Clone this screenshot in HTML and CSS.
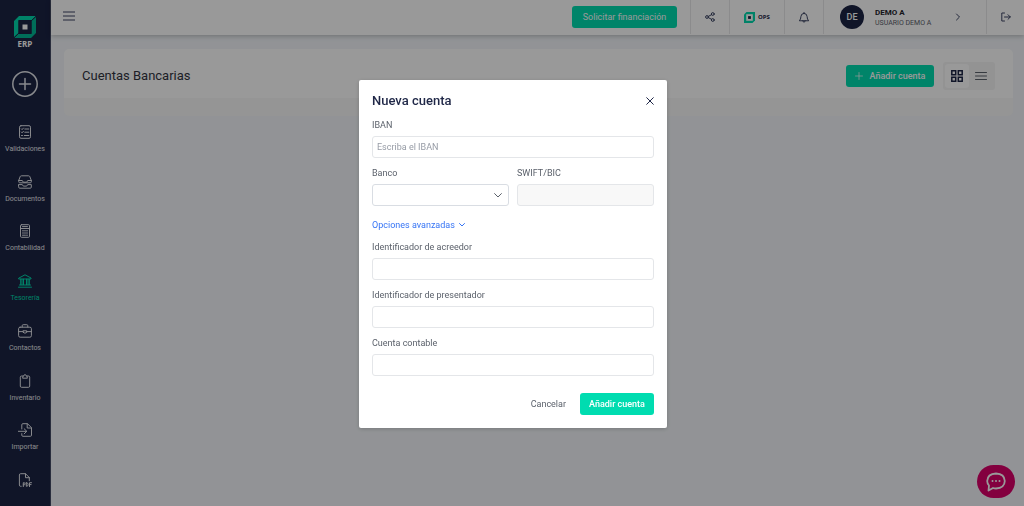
FILE: index.html
```html
<!DOCTYPE html>
<html lang="es">
<head>
<meta charset="utf-8">
<title>Cuentas Bancarias</title>
<link rel="stylesheet" href="styles.css">
</head>
<body>
<div class="app">
  <aside class="sidebar">
    <a class="brand" href="#" aria-label="Inicio ERP">
      <svg class="brand-mark" viewBox="0 0 22 22"><path fill="#00d9ad" d="M5 0H22L18 4H4.500V17L0 21V5Z"/><path fill="#00b894" d="M22 1V17L17 22H0L4 18H17.500V5Z"/><path fill="#1b2344" d="M4.500 4.500H17.500V17.500H4.500Z"/><path stroke="#1b2344" stroke-width=".8" d="M0 22l5-5M17 5l5-5"/><path fill="#fff" d="M8.500 8.500h5v5h-5z"/></svg>
      <span class="brand-name">ERP</span>
    </a>
    <button class="create" type="button" aria-label="Crear">
      <svg viewBox="0 0 26 26"><circle cx="13" cy="13" r="12.200"/><path d="M13 7.500v11M7.500 13h11"/></svg>
    </button>
    <nav class="nav">
      <a class="nav-item" href="#"><svg viewBox="0 0 14 14"><rect x="1.500" y=".7" width="11" height="12.600" rx="1.500"/><path d="M3.300 3.800l.8.800 1.300-1.500M3.300 7l.8.800 1.300-1.500M3.500 10.500h1M6.800 4h4M6.800 7.200h4M6.300 10.500h4.500"/></svg><span>Validaciones</span></a>
      <a class="nav-item" href="#"><svg viewBox="0 0 14 14"><path d="M.7 5.500L2.200 1.600Q2.500.8 3.400.8h7.200q.9 0 1.200.8l1.500 3.900v1.300q0 1-1 1H1.700q-1 0-1-1ZM.7 5.500h3.600q.4 1.700 1.500 1.700h2.400q1.100 0 1.500-1.700h3.600M.7 9.600h3.600q.4 1.500 1.500 1.500h2.400q1.100 0 1.500-1.500h3.600v2.600q0 1-1 1H1.700q-1 0-1-1Z"/></svg><span>Documentos</span></a>
      <a class="nav-item" href="#"><svg viewBox="0 0 14 14"><rect x="2.500" y=".7" width="9" height="12.600" rx="1"/><path d="M2.500 4.500h9M4.500 2.600h5M4.500 6.800h1M6.500 6.800h1M8.500 6.800h1M4.500 9h1M6.500 9h1M8.500 9h1M4.500 11.200h3M8.500 11.200h1"/></svg><span>Contabilidad</span></a>
      <a class="nav-item active" href="#"><svg viewBox="0 0 14 14"><path d="M1 4L7 .8 13 4v1H1ZM2.700 5.200v5.500M5.500 5.200v5.500M8.500 5.200v5.500M11.300 5.200v5.500M4 5.200v5.500M10 5.200v5.500M1.500 11h11M.5 13.200h13"/></svg><span>Tesorería</span></a>
      <a class="nav-item" href="#"><svg viewBox="0 0 14 14"><rect x=".6" y="3.200" width="12.800" height="10" rx="1.500"/><path d="M4.200 3V1.700q0-1 1-1h3.600q1 0 1 1V3M.6 7.600h4.600M8.800 7.600h4.600M5.300 6.800h3.400v1.700q-1.700 1.500-3.400 0Z"/></svg><span>Contactos</span></a>
      <a class="nav-item" href="#"><svg viewBox="0 0 14 14"><path d="M4.800 2H3.500q-1.200 0-1.200 1.200v8.900q0 1.200 1.200 1.200h7q1.200 0 1.200-1.200V3.200Q11.700 2 10.500 2H9.200M4.700 3.800l.5-1.900h.6q.2-1.300 1.200-1.300t1.200 1.300h.6l.5 1.900Z"/></svg><span>Inventario</span></a>
      <a class="nav-item" href="#"><svg viewBox="0 0 14 14"><path d="M3.800 6V1.800q0-1.100 1.100-1.100h4.600l4 4v7.500q0 1.100-1.100 1.100H4.900q-1.100 0-1.100-1.100v-1.600M9.200.8v4.200h4.200M.3 8.300h8.200M6.200 5.800l2.600 2.500-2.600 2.500"/></svg><span>Importar</span></a>
      <a class="nav-item" href="#" aria-label="PDF"><svg viewBox="0 0 14 14"><path d="M3.200 13.300H2.600q-1.200 0-1.200-1.200V1.900Q1.400.7 2.600.7h4.900l3.800 3.800v3.300M7.500.8v3.900h3.800M5.300 13.600V9.700h.8q1 0 1 1.100t-1 1.100h-.8M8.300 9.700v3.600h.4q1.400 0 1.400-1.800t-1.400-1.800ZM11.500 13.600V9.700h2M11.500 11.600h1.600"/></svg></a>
    </nav>
  </aside>

  <div class="page">
    <header class="topbar">
      <button class="menu" type="button" aria-label="Menú"><svg viewBox="0 0 12 10"><path d="M0 1h12M0 5h12M0 9h12"/></svg></button>
      <div class="promo"><button class="btn btn-wide" type="button">Solicitar financiación</button></div>
      <a class="cell share" href="#" aria-label="Compartir"><svg viewBox="0 0 10 10"><circle cx="2" cy="5" r="1.400"/><circle cx="7.800" cy="2" r="1.400"/><circle cx="7.800" cy="8" r="1.400"/><path d="M3.300 4.400l3.200-1.700M3.300 5.600l3.200 1.700"/></svg></a>
      <a class="cell ops" href="#"><svg viewBox="0 0 11 11"><path fill="#00d9ad" d="M2.500 0H11V8.500L8.500 11H0V2.500Z"/><path fill="#fff" d="M2.200 2.200h6.600v6.600H2.200z"/><path fill="#1b2344" d="M4.100 4.100h2.800v2.800H4.100z"/></svg><span>OPS</span></a>
      <button class="cell bell" type="button" aria-label="Notificaciones"><svg viewBox="0 0 10 11"><path d="M.6 8.500Q1.900 7.300 1.900 4.600 2 1.600 5 1.400 8 1.600 8.100 4.600q0 2.700 1.300 3.900ZM5 1.400V.4M3.800 8.700Q4 10.200 5 10.200t1.200-1.500"/></svg></button>
      <button class="cell user" type="button">
        <span class="avatar">DE</span>
        <span class="who"><b>DEMO A</b><span>USUARIO DEMO A</span></span>
        <svg viewBox="0 0 6 8"><path d="M1.500 1l3 3-3 3"/></svg>
      </button>
      <a class="cell logout" href="#" aria-label="Salir"><svg viewBox="0 0 10 10"><path d="M3.500 1H.8v8h2.700M3.500 5h5.800M7 2.700L9.300 5 7 7.300"/></svg></a>
    </header>
    <main class="content">
      <section class="card">
        <div class="card-head">
          <h1>Cuentas Bancarias</h1>
          <button class="btn btn-add" type="button"><svg viewBox="0 0 8 8"><path d="M4 .5v7M.5 4h7"/></svg>Añadir cuenta</button>
          <div class="views">
            <button class="view on" type="button" aria-label="Cuadrícula"><svg viewBox="0 0 12 12"><path d="M.8.800h3.900v3.900H.8zM7.300.8h3.900v3.900H7.300zM.8 7.300h3.900v3.900H.8zM7.300 7.300h3.900v3.900H7.300z"/></svg></button>
            <button class="view" type="button" aria-label="Lista"><svg viewBox="0 0 12 12"><path d="M.5 2.500h11M.5 6h11M.5 9.500h11"/></svg></button>
          </div>
        </div>
        <div class="card-body"></div>
      </section>
    </main>
  </div>
</div>

<button class="chat" type="button" aria-label="Chat"><svg viewBox="0 0 20 20"><path d="M2.500 18.500l.5-5Q1.200 11.500 1.200 9 1.500 1.900 10 1.500q8.500.4 8.800 7.500-.3 7.100-8.800 7.500-1.800 0-3-.5Z"/><path class="dots" d="M6.500 9h.01M10 9h.01M13.500 9h.01"/></svg></button>

<div class="overlay">
  <form class="modal" role="dialog" aria-labelledby="modal-title">
    <div class="modal-head">
      <h2 id="modal-title">Nueva cuenta</h2>
      <button class="close" type="button" aria-label="Cerrar"><svg viewBox="0 0 8 8"><path d="M.7.700l6.600 6.600M7.300.7L.7 7.300"/></svg></button>
    </div>
    <div class="fields">
      <div class="field"><label for="iban">IBAN</label><input id="iban" type="text" placeholder="Escriba el IBAN"></div>
      <div class="row">
        <div class="field"><label for="bank">Banco</label>
          <div class="select"><select id="bank"><option></option></select><svg viewBox="0 0 8 5"><path d="M.6.600L4 4 7.400.6"/></svg></div>
        </div>
        <div class="field"><label for="bic">SWIFT/BIC</label><input id="bic" type="text" disabled></div>
      </div>
    </div>
    <button class="advanced" type="button">Opciones avanzadas<svg viewBox="0 0 6 4"><path d="M.5.500L3 3 5.500.5"/></svg></button>
    <div class="fields">
      <div class="field"><label for="creditor">Identificador de acreedor</label><input id="creditor" type="text"></div>
      <div class="field"><label for="presenter">Identificador de presentador</label><input id="presenter" type="text"></div>
      <div class="field"><label for="account">Cuenta contable</label><input id="account" type="text"></div>
    </div>
    <div class="modal-foot">
      <button class="cancel" type="button">Cancelar</button>
      <button class="btn btn-save" type="submit">Añadir cuenta</button>
    </div>
  </form>
</div>
</body>
</html>
```
FILE: styles.css
```css
* { box-sizing: border-box; }
body { margin: 0; font-family: Roboto, sans-serif; font-size: 9px; line-height: 10px; color: #5b616b; background: #f3f6fa; }
button, input, select { font: inherit; color: inherit; }
button { padding: 0; border: 0; background: none; }
a { color: inherit; text-decoration: none; }
h1, h2 { margin: 0; }
svg { display: block; flex: none; fill: none; stroke: currentColor; stroke-width: 1; stroke-linecap: round; stroke-linejoin: round; }

.app { display: flex; height: 100vh; }
.sidebar { display: flex; flex-direction: column; align-items: center; flex: none; width: 51px; padding: 16px 0 19px; overflow: hidden; color: #e3e5ea; background: #1b2344; border-right: 1px solid #454c66; }
.brand { display: flex; flex-direction: column; align-items: center; gap: 1px; color: #fff; }
.brand-mark { width: 22px; height: 22px; stroke: none; }
.brand-name { font: 700 8px/10px "Open Sans", sans-serif; }
.create { margin-top: 22px; }
.create svg { width: 26px; height: 26px; stroke-width: 1.5; }
.nav { display: flex; flex-direction: column; justify-content: space-between; flex: 1; margin-top: 28px; }
.nav-item { display: flex; flex-direction: column; align-items: center; gap: 5px; font-size: 7px; }
.nav-item svg { width: 14px; height: 14px; }
.nav-item.active { color: #00d9ad; }

.page { display: flex; flex-direction: column; flex: 1; min-width: 0; }
.topbar { display: flex; flex: none; height: 35px; color: #3c4564; background: #fff; box-shadow: 0 1px 5px #00000040; }
.menu { padding-left: 12px; margin-bottom: 3px; }
.menu svg { width: 12px; height: 10px; }
.promo { display: flex; justify-content: flex-end; flex: 1; padding: 6px 13px 0 0; }
.btn { display: flex; align-items: center; justify-content: center; height: 22px; border-radius: 3px; color: #fff; background: #00dcb0; }
.btn-wide { width: 105px; }
.cell { display: flex; align-items: center; justify-content: center; flex: none; height: 34px; border-left: 1px solid #e8e8ea; }
.share { width: 39px; }
.share svg { width: 10px; height: 10px; }
.ops { width: 55px; gap: 3px; font: 700 6px/10px "Open Sans", sans-serif; color: #1b2344; }
.ops svg { width: 11px; height: 11px; stroke: none; }
.bell { width: 39px; }
.bell svg { width: 10px; height: 11px; }
.user { width: 163px; padding: 0 25px 0 16px; justify-content: flex-start; text-align: left; }
.user svg { width: 6px; height: 8px; margin-left: auto; }
.avatar { display: grid; place-items: center; width: 24px; height: 24px; border-radius: 50%; font-weight: 500; color: #fff; background: #1b2344; }
.who { display: flex; flex-direction: column; margin-left: 11px; padding-top: 1px; font-size: 7px; color: #5b616b; }
.who b { font-size: 8px; color: #23252c; }
.logout { width: 38px; }
.logout svg { width: 10px; height: 10px; }

.content { flex: 1; padding: 14px 11px 0 13px; }
.card { overflow: hidden; border-radius: 5px; }
.card-head { display: flex; align-items: center; height: 49px; padding: 5px 18px 0; background: #fff; }
.card-head h1 { flex: 1; font-size: 13px; font-weight: 400; line-height: 16px; color: #32353f; }
.btn-add { width: 88px; gap: 7px; font-weight: 500; }
.btn-add svg { width: 8px; height: 8px; stroke-width: .7; }
.views { display: flex; padding: 2px; margin-left: 9px; border-radius: 3px; background: #f5f5f6; }
.view { display: grid; place-items: center; width: 24px; height: 24px; border-radius: 3px; }
.view svg { width: 12px; height: 12px; }
.view.on { color: #1b2344; background: #fff; }
.view.on svg { stroke-width: 1.500; stroke-linejoin: miter; }
.card-body { height: 18px; background: #f8f8f8; }

.chat { position: fixed; right: 9px; bottom: 8px; display: grid; place-items: center; width: 38px; height: 33px; border-radius: 17px; color: #fff; background: #db006a; }
.chat svg { width: 20px; height: 20px; stroke-width: 1.800; }
.chat .dots { stroke-width: 2; }

.overlay { position: fixed; inset: 0; display: flex; align-items: center; justify-content: center; padding: 2px 0 0 2px; background: rgba(0, 0, 0, .4); }
.modal { width: 308px; padding: 13px; border-radius: 2px; background: #fff; box-shadow: 0 1px 4px #00000030; }
.modal-head { display: flex; align-items: center; justify-content: space-between; margin-bottom: 11px; color: #1f2747; }
.modal-head h2 { font-size: 13px; font-weight: 500; line-height: 16px; }
.close svg { width: 8px; height: 8px; }
.fields { display: grid; gap: 10px; }
.row { display: grid; grid-template-columns: 1fr 1fr; gap: 8px; }
.field { display: grid; gap: 6px; }
.field input, .field select { width: 100%; height: 22px; padding: 0 4px; border: 1px solid #e4e6e9; border-radius: 3px; background: #fff; }
.field input::placeholder { color: #969ba5; opacity: 1; }
.field input:disabled { background: #f8f8f8; }
.select { position: relative; }
.field select { display: block; appearance: none; border-color: #d9dde3; }
.select svg { position: absolute; top: 9px; right: 7px; width: 8px; height: 5px; pointer-events: none; }
.advanced { display: flex; align-items: center; gap: 4px; margin: 14px 0 12px; color: #3775f5; }
.advanced svg { width: 6px; height: 4px; }
.modal-foot { display: flex; align-items: center; justify-content: flex-end; gap: 14px; margin-top: 17px; }
.btn-save { width: 74px; font-weight: 500; }
```
